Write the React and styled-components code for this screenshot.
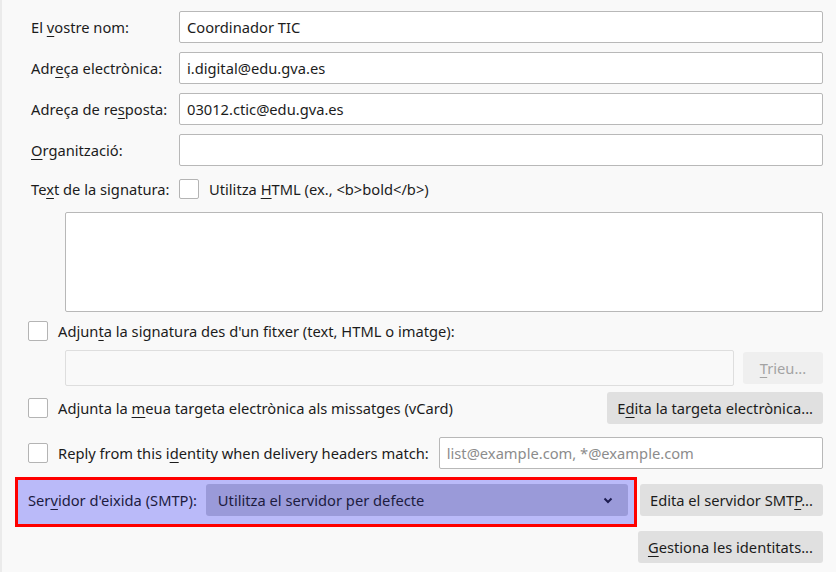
import React from 'react';
import styled, { createGlobalStyle } from 'styled-components';

const GlobalStyle = createGlobalStyle`
  html, body {
    margin: 0;
    padding: 0;
    background: #f9f9f9;
  }
  body {
    font-family: "Noto Sans", "Open Sans", sans-serif;
    font-size: 14.7px;
    color: #1c1c1c;
  }
  * { box-sizing: border-box; }
`;

const Page = styled.div`
  width: 836px;
  height: 572px;
  border-left: 2px solid #ebebeb;
  padding: 11px 13px 0 13px;
  display: flex;
  flex-direction: column;
`;

const IdentityGrid = styled.div`
  display: grid;
  grid-template-columns: 140px 1fr;
  column-gap: 8px;
  row-gap: 9px;
  padding-left: 16px;
  align-items: center;
`;

const Label = styled.label`
  white-space: nowrap;
  line-height: 20px;
`;

const Key = styled.u`
  text-decoration-thickness: 1px;
  text-underline-offset: 3px;
`;

const TextInput = styled.input`
  height: 32px;
  width: 100%;
  border: 1px solid #b8b8b8;
  border-radius: 2px;
  background: #ffffff;
  padding: 0 7px;
  font: inherit;
  color: #1c1c1c;
  outline: none;
  &::placeholder {
    color: #8c8c8c;
  }
`;

const FileInput = styled(TextInput)`
  height: 36px;
  flex: 1;
  background: #f9f9f9;
  border-color: #dedede;
`;

const MatchInput = styled(TextInput)`
  flex: 1;
  margin-left: 0;
`;

const Box = styled.span`
  display: inline-block;
  width: 20px;
  height: 20px;
  flex: none;
  border: 1px solid #b4b4b4;
  border-radius: 2px;
  background: #ffffff;
`;

const InlineCheck = styled.div`
  height: 28px;
  display: flex;
  align-items: center;
  gap: 10px;
`;

const SignatureArea = styled.textarea`
  display: block;
  margin: 9px 0 0 50px;
  height: 100px;
  border: 1px solid #b8b8b8;
  border-radius: 2px;
  background: #ffffff;
  resize: none;
  font: inherit;
  outline: none;
`;

const Row = styled.div`
  display: flex;
  align-items: center;
  min-height: 32px;
  margin-top: ${p => p.$mt || 0}px;
  padding-left: ${p => p.$indent || 0}px;
  gap: ${p => p.$gap || 10}px;
`;

const RowText = styled.span`
  white-space: nowrap;
  flex: ${p => (p.$grow ? 1 : 'none')};
`;

const Button = styled.button`
  height: 32px;
  border: none;
  border-radius: 3px;
  background: ${p => (p.disabled ? '#efefef' : '#e0e0e0')};
  color: ${p => (p.disabled ? '#a3a3a3' : '#1c1c1c')};
  font: inherit;
  padding: 0 10px;
  white-space: nowrap;
  flex: none;
  width: ${p => (p.$w ? `${p.$w}px` : 'auto')};
  margin-top: ${p => p.$mt || 0}px;
`;

const SmtpRow = styled.div`
  display: flex;
  align-items: flex-start;
  gap: 3px;
  margin-top: 8px;
`;

const Highlight = styled.div`
  flex: 1;
  display: flex;
  align-items: center;
  gap: 9px;
  border: 3px solid #ff0000;
  background: #babaf9;
  padding: 4px 6px 8px 10px;
  color: #1d1c3f;
`;

const Select = styled.div`
  flex: 1;
  height: 32px;
  border-radius: 3px;
  background: #9a9ad9;
  display: flex;
  align-items: center;
  justify-content: space-between;
  padding: 0 15px 0 12px;
  color: #1d1c3f;
`;

const Footer = styled.div`
  display: flex;
  justify-content: flex-end;
  margin-top: 4px;
`;

const Chevron = () => (
  <svg width="10" height="7" viewBox="0 0 10 7">
    <path d="M1.5 1.5 L5 5 L8.5 1.5" fill="none" stroke="#1d1c50" strokeWidth="2" />
  </svg>
);

export default function App() {
  return (
    <>
      <GlobalStyle />
      <Page>
        <IdentityGrid>
          <Label>El <Key>v</Key>ostre nom:</Label>
          <TextInput defaultValue="Coordinador TIC" />
          <Label>Adr<Key>e</Key>ça electrònica:</Label>
          <TextInput defaultValue="i.digital@edu.gva.es" />
          <Label>Adreça de re<Key>s</Key>posta:</Label>
          <TextInput defaultValue="03012.ctic@edu.gva.es" />
          <Label><Key>O</Key>rganització:</Label>
          <TextInput />
          <Label>Te<Key>x</Key>t de la signatura:</Label>
          <InlineCheck>
            <Box />
            <RowText>Utilitza <Key>H</Key>TML (ex., &lt;b&gt;bold&lt;/b&gt;)</RowText>
          </InlineCheck>
        </IdentityGrid>

        <SignatureArea />

        <Row $mt={3} $indent={13}>
          <Box />
          <RowText>Adjun<Key>t</Key>a la signatura des d'un fitxer (text, HTML o imatge):</RowText>
        </Row>

        <Row $mt={3} $indent={50} $gap={9}>
          <FileInput disabled />
          <Button disabled $w={80}><Key>T</Key>rieu...</Button>
        </Row>

        <Row $mt={6} $indent={13}>
          <Box />
          <RowText $grow>Adjunta la <Key>m</Key>eua targeta electrònica als missatges (vCard)</RowText>
          <Button>E<Key>d</Key>ita la targeta electrònica...</Button>
        </Row>

        <Row $mt={13} $indent={13}>
          <Box />
          <RowText>Reply from this i<Key>d</Key>entity when delivery headers match:</RowText>
          <MatchInput placeholder="list@example.com, *@example.com" />
        </Row>

        <SmtpRow>
          <Highlight>
            <RowText>Ser<Key>v</Key>idor d'eixida (SMTP):</RowText>
            <Select>
              <span>Utilitza el servidor per defecte</span>
              <Chevron />
            </Select>
          </Highlight>
          <Button $mt={7}>Edita el servidor SMT<Key>P</Key>...</Button>
        </SmtpRow>

        <Footer>
          <Button>
            <Key>G</Key>estiona les identitats...
          </Button>
        </Footer>
      </Page>
    </>
  );
}
